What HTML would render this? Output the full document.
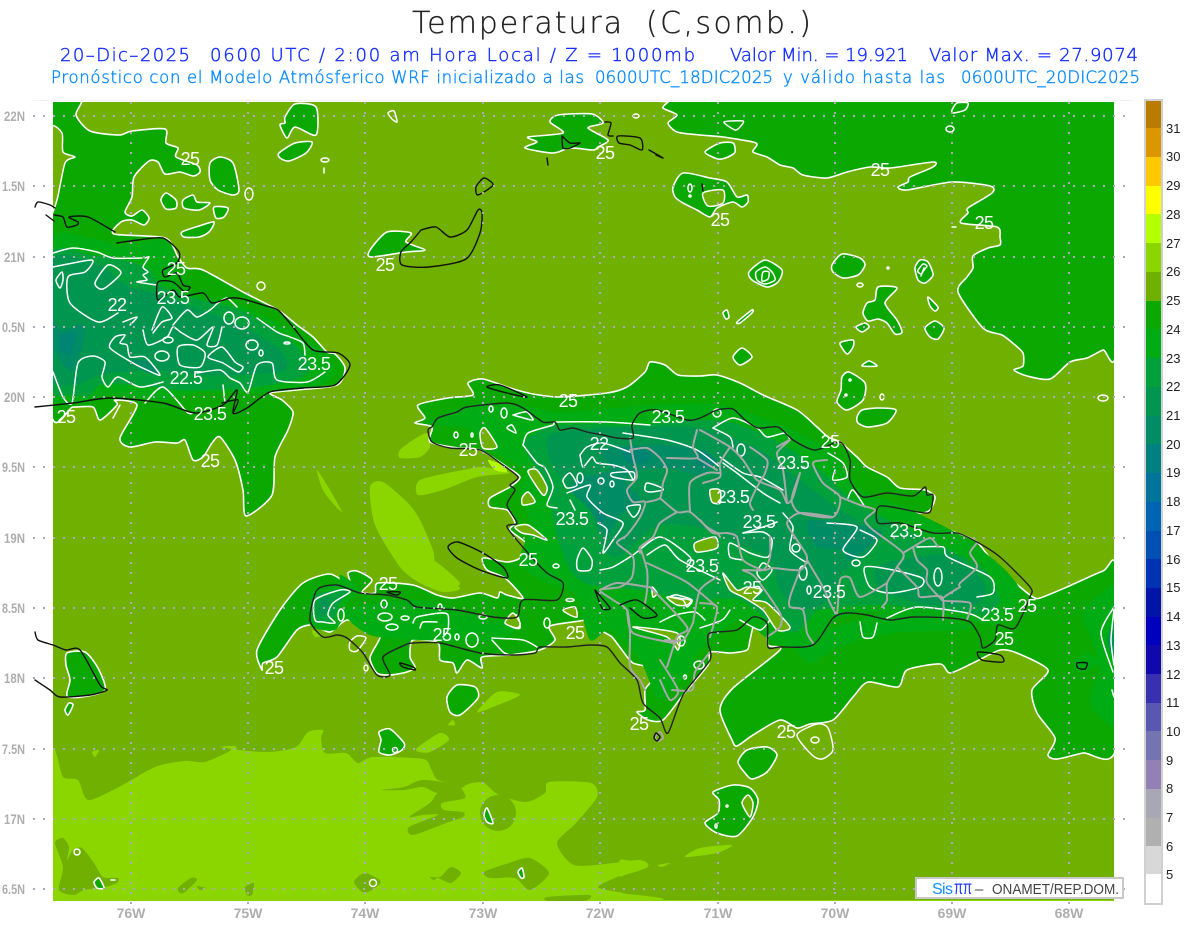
<!DOCTYPE html>
<html lang="es"><head><meta charset="utf-8"><title>Temperatura</title>
<style>
html,body{margin:0;padding:0;background:#fff}
svg{display:block}
text{font-family:"Liberation Sans",sans-serif}
.g{fill:#0aa800;stroke:#fff;stroke-width:1.6;stroke-linejoin:round}
.l{fill:#70b000;stroke:#fff;stroke-width:1.5;stroke-linejoin:round}
.n{fill:#70b000}
.b{fill:#8cd600}
.w{fill:none;stroke:#fff;stroke-width:1.5;stroke-linejoin:round;stroke-linecap:round}
.k{fill:none;stroke:#111;stroke-width:1.4;stroke-linejoin:round;stroke-linecap:round}
.p{fill:none;stroke:#a8a8a8;stroke-width:2;stroke-linejoin:round;stroke-linecap:round}
.d{stroke:#b0a8b8;stroke-width:2;stroke-dasharray:2 8;fill:none}
.t{fill:#fff;font-size:18px;text-anchor:middle;letter-spacing:-.6px}
.a{fill:#aeaeae;font-size:14px;font-weight:bold}
.c{fill:#aeaeae;font-size:14px;font-weight:bold;text-anchor:middle}
.v{fill:#222;font-size:13px}
.dj{font-family:"DejaVu Sans","Liberation Sans",sans-serif;font-weight:200}
.h1{fill:#1830ff;stroke:#1830ff;stroke-width:.45px;font-size:18px}
.h2{fill:#0a8cff;stroke:#0a8cff;stroke-width:.45px;font-size:16.5px}
</style></head><body>
<svg id="s" width="1200" height="927" viewBox="0 0 1200 927" xmlns="http://www.w3.org/2000/svg">
<defs><clipPath id="m"><rect x="53" y="102" width="1061" height="799"/></clipPath></defs>
<rect width="1200" height="927" fill="#fff"/>
<text class="dj" x="412" y="33" font-size="30" fill="#222" stroke="#222" stroke-width=".3" textLength="210" lengthAdjust="spacing">Temperatura</text>
<text class="dj" x="646" y="33" font-size="30" fill="#222" stroke="#222" stroke-width=".3" textLength="165" lengthAdjust="spacing">(C,somb.)</text>
<text class="h1 dj" x="60" y="61" textLength="130" lengthAdjust="spacing">20–Dic–2025</text>
<text class="h1 dj" x="210" y="61" textLength="485" lengthAdjust="spacing">0600 UTC / 2:00 am Hora Local / Z = 1000mb</text>
<text class="h1 dj" x="730" y="61" textLength="178" lengthAdjust="spacing">Valor Min. = 19.921</text>
<text class="h1 dj" x="929" y="61" textLength="209" lengthAdjust="spacing">Valor Max. = 27.9074</text>
<text class="h2 dj" x="51" y="83" textLength="533" lengthAdjust="spacing">Pronóstico con el Modelo Atmósferico WRF inicializado a las</text>
<text class="h2 dj" x="595" y="83" textLength="178" lengthAdjust="spacing">0600UTC_18DIC2025</text>
<text class="h2 dj" x="783" y="83" textLength="162" lengthAdjust="spacing">y válido hasta las</text>
<text class="h2 dj" x="961" y="83" textLength="179" lengthAdjust="spacing">0600UTC_20DIC2025</text>
<line x1="33" y1="100.5" x2="1133" y2="100.5" stroke="#f2f2f2"/>

<g clip-path="url(#m)">
<rect x="53" y="102" width="1061" height="799" class="n"/>
<rect x="53" y="900" width="1061" height="1" fill="#8cd600"/>
<!-- bright 26-27 -->
<polygon class="b" points="53,752 63,777 78,780 88,800 117,788 155,767 185,761 205,762 231,750 220,747 235,746 239,750 270,752 296,747 308,732 323,730 321,738 325,753 346,753 358,763 373,757 423,759 431,769 438,780 463,785 472,783 484,783 499,795 526,802 545,793 549,782 591,783 597,797 576,823 557,843 574,865 614,863 640,860 648,866 622,875 598,887 622,893 634,901 53,901"/>
<g class="n">
<polygon points="55,843 63,838 69,847 67,860 73,850 82,848 94,863 103,877 118,878 117,883 105,887 84,890 74,895 59,890 63,867"/>
<polygon points="178,888 191,878 197,880 185,892 180,893"/><polygon points="197,886 206,888 200,890"/>
<polygon points="245,887 254,883 252,895 247,895"/>
<polygon points="354,882 365,873 381,882 365,893"/>
<polygon points="430,877 440,877 451,867 461,873 451,883 438,878 434,880"/>
<polygon points="484,872 509,863 530,858 549,873 530,890 515,878 490,878"/>
<circle cx="498" cy="813" r="18"/>
<polygon points="547,897 589,895 585,901 549,901"/>
<polygon points="381,790 404,787 423,780 463,785 461,788 438,793 423,787 404,790"/>
<polygon points="461,788 465,798 442,803 444,810 463,812 463,817 446,823 413,835 409,827 438,815 423,815 409,817 430,803 438,793 457,788"/>
</g>
<g class="b">
<polygon points="92,752 99,750 95,757"/>
<polygon points="417,748 440,733 449,740 430,752 419,752"/>
<polygon points="448,725 453,720 455,725"/>
<polygon points="477,712 497,692 520,695 493,707"/>
<polygon points="685,857 700,848 732,845 717,853"/>
<polygon points="658,865 670,863 662,867"/>
<polygon points="620,860 635,862 648,867 625,875 620,876"/>
<polygon points="620,892 633,901 620,901"/>
<polygon points="400,450 413,440 427,433 430,447 420,457 400,458"/>
<polygon points="510,473 483,467 463,470 420,480 418,495 443,490 477,477"/>
<polygon points="370,487 383,482 408,503 420,520 433,550 437,570 460,588 443,592 420,583 400,567 375,525"/>
<polygon points="413,560 433,560 460,583 447,587 430,577"/>
<polygon points="317,470 330,490 342,512 330,500 322,488"/>
<polygon points="312,630 322,635 315,637"/>
</g>
<polygon points="488,460 503,465 507,472 495,470" fill="#b4ff00"/>

<!-- big NE 24-25 -->
<polygon class="g" points="668,102 663,108 677,115 668,123 677,132 700,135 723,137 753,142 757,145 753,152 767,157 780,165 793,168 803,175 827,178 847,172 870,167 890,168 933,162 933,167 910,177 908,182 898,187 907,190 952,182 990,186 992,193 968,208 968,213 961,223 997,227 1000,237 1000,245 988,248 973,256 973,268 967,277 958,292 983,328 1002,335 1015,345 1023,353 1023,366 1014,370 1027,376 1050,379 1070,362 1087,358 1103,350 1116,348 1116,100 668,100"/>

<!-- Cuba / NW -->
<polygon class="g" points="50,100 81,100 76,115 90,131 119,135 132,131 165,129 166,143 178,148 176,157 197,165 200,172 193,176 180,172 165,174 158,162 149,161 134,177 132,197 125,212 132,216 142,210 149,218 144,225 132,220 121,222 114,234 165,238 178,257 187,268 203,270 243,292 278,310 297,325 313,337 327,352 335,354 345,368 337,385 297,390 270,393 282,400 293,412 288,430 275,457 272,495 246,516 243,490 235,460 220,437 212,443 203,457 193,460 185,440 177,443 155,442 130,447 120,438 137,405 115,400 117,405 100,420 93,407 73,407 50,405"/>
<polygon class="l" points="50,130 62,133 63,152 75,157 65,163 57,200 50,212"/>

<!-- Jamaica-like -->
<polygon class="g" points="67,653 85,652 98,668 105,690 82,697 67,696 70,680 66,665"/>

<!-- Hispaniola main -->
<polygon class="g" points="415,423 425,418 418,405 448,398 473,395 468,383 483,379 510,388 533,394 560,397 607,393 627,387 645,372 650,362 665,365 678,375 700,376 717,375 740,383 763,395 797,410 817,427 828,437 840,442 857,457 867,467 887,477 900,488 925,490 935,497 930,510 920,513 890,510 907,515 933,525 957,533 977,542 997,567 1020,587 1033,597 1040,598 1067,587 1103,571 1116,570 1116,748 1083,753 1057,759 1048,755 1055,738 1037,713 1032,690 1048,670 1017,653 1000,650 973,663 950,673 940,664 907,670 898,687 868,682 853,697 833,720 810,724 797,728 780,720 753,735 737,746 732,740 720,710 733,688 780,650 768,645 767,625 755,622 750,640 747,650 730,653 710,652 708,665 683,695 663,720 648,720 637,712 645,710 645,690 652,680 652,668 633,663 622,650 612,637 602,630 612,620 612,612 597,612 585,620 550,626 555,640 540,650 510,655 482,657 482,668 467,660 457,673 453,663 440,660 438,643 413,640 410,657 415,667 407,672 390,675 377,673 370,658 378,642 380,635 367,630 347,620 330,632 312,625 297,630 277,657 263,663 262,670 257,650 280,610 303,583 330,574 350,585 348,573 357,571 372,580 362,592 375,593 378,583 413,585 437,595 453,598 480,593 497,598 500,592 507,595 523,598 505,578 487,570 483,558 507,562 520,558 528,545 510,530 515,523 507,510 490,507 490,498 510,487 520,477 507,467 480,450 458,448 430,442 432,427"/>

<!-- 23-24 shading -->
<g fill="#00ac14">
<polygon points="430,420 470,405 520,405 560,412 650,405 720,405 780,425 830,450 860,490 900,505 960,535 1000,565 1020,590 1010,615 990,625 940,615 870,612 835,620 810,650 770,640 740,620 700,650 690,670 660,700 640,660 610,630 590,640 575,595 540,580 520,560 530,525 520,490 525,470 490,450 470,430 440,425"/>
<polygon points="810,663 833,650 860,640 900,632 960,630 970,625 900,610 800,640"/>
<polygon points="1083,610 1100,595 1116,592 1116,720 1095,712 1090,695 1100,670 1092,640 1085,625"/>
<polygon points="1073,662 1087,653 1100,663 1080,672"/>
<polygon points="50,243 90,238 120,245 165,240 175,260 180,290 240,305 280,325 325,352 335,372 320,385 270,392 200,392 165,400 110,395 50,397"/>
<polygon points="345,610 420,600 490,620 520,620 500,640 420,640 370,635"/>
<polygon points="313,590 350,585 345,610 335,630 310,625"/>
<polygon points="340,575 360,590 345,600"/>
</g>
<polygon points="1114,625 1107,640 1114,660" fill="#009650"/>
<!-- 22-23 -->
<g fill="#00a03c">
<polygon points="525,440 560,425 640,425 720,420 775,440 820,470 860,505 940,545 985,570 1000,600 985,615 940,610 880,605 820,610 800,630 780,630 740,600 690,600 640,590 590,585 570,570 555,530 545,480 530,460"/>
<polygon points="50,255 90,255 130,262 150,270 160,285 200,300 240,310 290,340 310,365 300,378 250,388 180,390 130,385 100,385 90,395 70,395 50,385"/>
<polygon points="315,595 350,590 340,603 333,620 315,622"/>
</g>
<!-- 21-22 -->
<g fill="#009650">
<polygon points="550,435 600,428 700,428 760,450 800,480 840,510 880,535 860,560 840,575 830,600 800,610 780,590 770,560 730,540 710,530 660,525 620,555 605,550 590,510 570,490 550,460"/>
<polygon points="880,565 950,555 985,585 975,605 930,605 880,590"/>
<polygon points="50,260 100,265 125,285 160,295 200,310 240,325 280,350 285,370 240,375 200,375 150,370 100,375 75,385 50,375"/>
<polygon points="320,600 330,597 327,610 320,617"/>
</g>
<!-- 20-21 -->
<g fill="#008c64">
<polygon points="600,450 640,445 690,447 715,462 700,475 670,468 640,470 625,480 640,500 620,515 606,535 590,510 570,490 580,478 610,470"/>
<polygon points="810,520 880,530 870,545 850,560 840,550 815,545"/>
<polygon points="50,320 62,330 83,325 83,345 72,370 60,360 50,340"/>
<polygon points="133,360 150,362 160,373 145,372"/>
</g>
<g fill="#008474">
<polygon points="622,448 650,452 645,462 628,462"/>
<polygon points="702,450 716,460 708,468 696,462"/>
<polygon points="597,505 607,515 600,522"/>
<polygon points="60,335 75,335 70,355 60,350"/>
</g>

<!-- light pockets -->
<g class="l">
<polygon points="522,498 528,492 535,502 523,505"/>
<polygon points="528,472 537,470 547,487 543,495"/>
<polygon points="515,527 528,525 547,540 533,535 522,533"/>
<polygon points="695,543 715,537 717,548 697,552"/>
<polygon points="710,490 720,490 720,503 712,502"/>
<polygon points="563,610 575,607 577,617 570,615"/>
<polygon points="480,433 485,428 497,447 483,448"/>
<polygon points="507,620 517,615 520,628 512,627"/>
<polygon points="633,627 677,633 678,650 667,637"/>
<polygon points="667,597 690,600 687,605 677,605"/>
<polygon points="652,587 657,593 653,597"/>
<polygon points="723,573 737,590 747,587 762,590 753,600 767,603 790,627 777,630 763,610 743,597 730,590"/>
<polygon points="350,642 357,636 366,638 357,651 350,650"/>
<polygon points="505,623 513,613 520,623 517,628"/>
</g>

<!-- islands -->
<g class="g">
<polygon points="285,117 295,104 316,107 316,135 295,127 287,138 280,125 285,123"/>
<polygon points="279,153 295,143 312,142 306,153 289,161 280,158"/>
<polygon points="210,163 220,157 233,163 239,190 233,195 218,190 210,180"/>
<polygon points="161,200 166,193 176,200 176,208 166,209"/>
<polygon points="183,200 193,195 197,202 210,203 199,210 184,208"/>
<polygon points="214,207 228,208 224,217 216,218"/>
<polygon points="182,232 199,226 214,222 209,232 199,237 184,237"/>
<polygon points="370,250 387,232 411,233 406,242 425,250 406,252 371,257"/>
<polygon points="558,115 592,114 603,123 588,128 608,140 598,147 593,150 570,148 553,153 525,148 537,142 528,137 563,133 550,122"/>
<polygon points="705,152 720,143 733,143 735,152 728,157 718,159"/>
<polygon points="673,187 683,173 710,178 727,182 737,197 747,195 748,202 742,207 733,202 717,208 710,217 697,210 683,203 675,197"/>
<polygon points="749,272 765,260 782,270 778,282 767,287 752,280"/>
<polygon points="832,265 842,254 860,258 865,265 858,275 843,278 833,272"/>
<polygon points="733,357 742,348 752,357 740,365"/>
<polygon points="723,313 727,310 729,317 726,319"/>
<polygon points="737,322 752,310 752,313 740,323"/>
<polygon points="878,287 897,288 885,303 897,320 902,332 895,334 887,323 878,319 868,321 863,313 867,303 875,300"/>
<polygon points="915,268 920,260 928,262 933,275 925,283 918,280"/>
<polygon points="928,297 938,307 935,311 930,306"/>
<polygon points="925,328 935,321 944,328 938,339 930,337"/>
<polygon points="856,327 865,323 869,327 862,332"/>
<polygon points="840,343 853,340 853,347 847,354"/>
<polygon points="862,366 869,361 877,366"/>
<polygon points="849,372 865,383 863,400 847,410 837,402 841,390 842,377"/>
<polygon points="857,417 862,410 878,408 896,410 887,423 868,427 858,423"/>
<polygon points="952,110 957,103 968,103 965,110 953,113"/>
<polygon points="379,732 390,729 404,743 402,750 390,755 379,752 381,740"/>
<polygon points="447,697 457,685 475,687 478,698 460,715 450,712"/>
<polygon points="65,710 69,703 73,705 68,715"/>
<polygon points="94,882 99,878 104,888 97,888"/>
<polygon points="484,815 487,808 493,823 487,822"/>
<polygon points="518,872 522,868 524,877 521,878"/>
<polygon points="738,762 747,750 767,747 777,755 767,772 752,779 745,773"/>
<polygon points="713,792 733,785 750,788 758,800 753,817 737,836 717,833 705,823 718,813 719,800"/>
</g>
<polygon class="l" points="742,803 748,795 753,803 750,817"/>
<polygon class="l" points="703,193 723,190 723,203 708,206"/>
<g class="w">
<polygon points="797,735 817,724 828,728 833,750 822,759 812,755"/>
<polygon points="756,272 765,267 772,272 775,280 765,284 757,280"/>
<polygon points="763,272 769,272 768,279 762,281"/>
<polygon points="918,270 923,264 927,266 924,270 921,274 918,272"/>
<ellipse cx="249" cy="194" rx="4" ry="6"/>
<ellipse cx="325" cy="160" rx="4" ry="2"/>
<line x1="324" y1="168" x2="324" y2="173"/>
<polygon points="388,113 394,111 397,122 392,119"/>
<ellipse cx="261" cy="286" rx="4" ry="4"/>
<polygon points="724,122 743,121 740,127 735,130"/>
<ellipse cx="636" cy="116" rx="3" ry="2"/>
<ellipse cx="860" cy="285" rx="3" ry="2"/>
<ellipse cx="882" cy="397" rx="2" ry="3"/>
<ellipse cx="1103" cy="398" rx="5" ry="3"/>
<ellipse cx="815" cy="740" rx="4" ry="3"/>
<ellipse cx="950" cy="129" rx="4" ry="3"/>
<circle cx="77" cy="852" r="3"/><circle cx="373" cy="883" r="3.5"/><circle cx="395" cy="750" r="2.5"/>
<line x1="111" y1="880" x2="115" y2="880"/>
<ellipse cx="366" cy="668" rx="2" ry="3"/>
<line x1="924" y1="268" x2="921" y2="276"/>
<ellipse cx="888" cy="268" rx="1" ry="1"/>
<line x1="952" y1="227" x2="956" y2="227"/>
<ellipse cx="846" cy="395" rx="1" ry="1"/>
<ellipse cx="850" cy="380" rx="1" ry="1"/>
<ellipse cx="690" cy="188" rx="2" ry="4"/>
<ellipse cx="690" cy="196" rx="1" ry="1"/>
<ellipse cx="727" cy="806" rx="1" ry="1"/><ellipse cx="716" cy="826" rx="1" ry="2"/>

<!-- Cuba 23.5 -->
<polyline points="53,253 73,248 97,252 113,258 142,258"/>
<polyline points="145,258 149,257 143,267 148,272 143,275 147,280 137,282 157,285"/>
<polyline points="53,267 92,260 85,272 68,277 70,303 98,322 118,313"/>
<polygon points="95,283 108,265 121,273 103,289"/>
<polygon points="56,280 62,272 63,280 60,288"/>
<polyline points="123,322 137,317 130,325"/>
<polygon points="110,348 115,337 125,335 120,343 127,345 130,357 145,357 160,375 147,370 133,363"/>
<polyline points="53,372 63,397 72,403 78,363 93,356 105,362 102,377 108,387 118,377 140,387 163,382"/>
<polyline points="145,403 163,387 187,412 193,413"/>
<polyline points="143,330 148,345 167,337 173,327 182,333 197,340 213,327 207,345 217,345 222,327"/>
<polyline points="152,330 162,307 172,318 162,322 153,333"/>
<polyline points="173,325 187,310 197,317 210,310 218,303 227,298 237,307"/>
<ellipse cx="229" cy="318" rx="5" ry="6"/><ellipse cx="242" cy="323" rx="7" ry="6"/><ellipse cx="252" cy="345" rx="6" ry="5"/><ellipse cx="261" cy="353" rx="2" ry="3"/><ellipse cx="162" cy="356" rx="7" ry="5"/><ellipse cx="168" cy="340" rx="5" ry="3"/><ellipse cx="287" cy="343" rx="3" ry="1"/>
<polygon points="178,347 193,345 205,353 200,367 180,365"/>
<polygon points="208,357 222,347 235,362 243,367 238,372 223,363"/>
<polyline points="197,373 220,370 230,378 240,383 248,392 257,365 272,363 277,380 307,382 325,372"/>
<polyline points="257,318 277,332 290,337 303,343 305,355"/>
<polyline points="223,385 225,403"/>
<polyline points="113,418 120,405"/>

<!-- Hispaniola 23.5 -->
<polyline points="523,445 528,433 553,425 557,422 607,422 650,425"/>
<polyline points="523,445 537,463 545,468 553,487 547,505 557,508"/>
<polyline points="623,433 667,440 697,450 720,467"/>
<polyline points="580,455 587,447 603,443 630,452"/>
<polyline points="580,455 583,467 592,457 597,463 613,465 627,470 633,480"/>
<polyline points="567,493 590,485 587,497 603,513 623,523 613,540 603,553 607,530 598,523"/>
<polyline points="570,500 575,510"/>
<polygon points="563,480 570,473 577,485 567,488"/>
<ellipse cx="580" cy="478" rx="3" ry="5"/><ellipse cx="601" cy="481" rx="3" ry="3"/><ellipse cx="612" cy="484" rx="2" ry="3"/>
<polygon points="627,507 640,505 638,513 633,517"/>
<polygon points="645,490 647,483 660,487 663,490 650,492"/>
<polygon points="612,473 633,472 633,480 613,477"/>
<polygon points="577,560 583,548 592,560 590,570 578,570"/>
<polyline points="600,570 613,567 633,555 660,537 690,557 687,567"/>
<polyline points="647,555 665,545 680,560 720,580"/>
<polygon points="683,600 670,597 677,595 692,600 687,607"/>
<ellipse cx="456" cy="435" rx="2" ry="3"/><ellipse cx="504" cy="413" rx="3" ry="5"/><ellipse cx="491" cy="409" rx="2" ry="3"/>
<polyline points="513,415 520,417 533,420 527,412 520,413 513,415"/>
<polygon points="507,428 512,425 516,433"/>
<ellipse cx="472" cy="435" rx="1" ry="2"/>
<ellipse cx="556" cy="566" rx="3" ry="2"/>
<ellipse cx="570" cy="600" rx="4" ry="1.5"/>
<polyline points="713,428 733,418 757,428 767,437 785,433 790,440"/>
<polyline points="713,428 730,437 733,447"/>
<ellipse cx="717" cy="413" rx="4" ry="4"/><ellipse cx="741" cy="450" rx="4" ry="6"/>
<polyline points="720,457 743,473 760,477 783,490"/>
<polyline points="723,463 737,473 763,493 780,503"/>
<polyline points="828,453 843,463 847,477 833,480 835,470"/>
<polyline points="848,498 853,490 865,507"/>
<polyline points="783,513 793,527 790,550 807,563"/>
<polyline points="743,533 763,527 777,522"/>
<polyline points="743,533 763,532 772,540 768,557 750,553 730,543 730,557 743,560"/>
<polygon points="757,573 763,563 772,570 763,580"/>
<ellipse cx="803" cy="573" rx="4" ry="7"/><ellipse cx="809" cy="590" rx="2" ry="4"/><ellipse cx="796" cy="548" rx="4" ry="4"/>
<polyline points="827,523 857,527 843,550 863,557 877,540 860,530"/>
<polygon points="865,567 893,570 922,578 920,587 890,593 870,587"/>
<ellipse cx="856" cy="563" rx="4" ry="3"/><ellipse cx="938" cy="577" rx="4" ry="9"/>
<polyline points="917,547 943,547 948,557 990,577 993,593 977,597"/>
<polyline points="887,618 917,607 967,613 983,620"/>
<polyline points="860,622 863,637 873,637 877,623"/>
<polyline points="700,628 722,620 730,610"/>
<polyline points="660,622 675,615 695,612 705,620"/>
<polyline points="740,620 760,630 770,620"/>
<ellipse cx="699" cy="665" rx="5" ry="4"/><ellipse cx="681" cy="641" rx="4" ry="5"/><ellipse cx="685" cy="677" rx="1.5" ry="2"/>
<polyline points="1114,607 1101,633 1113,672"/>
<polyline points="1114,610 1111,640 1114,665"/>
<polyline points="1112,690 1114,697"/>
<!-- Haiti S peninsula -->
<polygon points="315,600 340,590 350,592 333,603 328,615 335,623 323,622 315,620"/>
<ellipse cx="341" cy="615" rx="3" ry="6"/>
<ellipse cx="384" cy="604" rx="3" ry="4"/><ellipse cx="385" cy="617" rx="7" ry="4"/><ellipse cx="392" cy="627" rx="6" ry="3"/><ellipse cx="405" cy="618" rx="4" ry="2"/><ellipse cx="440" cy="607" rx="2" ry="3"/><ellipse cx="483" cy="617" rx="4" ry="2"/>
<polyline points="413,623 417,617 440,613 448,615 448,630 443,637"/>
<polyline points="420,628 423,622 437,622"/>
<ellipse cx="472" cy="640" rx="6" ry="7"/><ellipse cx="457" cy="637" rx="2" ry="3"/>
<polyline points="492,638 523,640 537,647"/>
<polyline points="492,640 503,652 510,655"/>
<ellipse cx="547" cy="623" rx="3" ry="5"/>
</g>
</g>

<!-- province lines -->
<g class="p">
<polyline points="630,438 633,457 637,477 627,490 633,502 645,502 640,517 627,535 617,543 633,557 632,577 620,587 600,590 613,600 627,610 630,633 630,667 640,680 645,690"/>
<polyline points="630,450 647,448 660,458 667,470 663,483 660,498 647,502"/>
<polyline points="660,498 677,512 690,512 707,527 717,533 720,537"/>
<polyline points="690,512 690,483 707,473 720,473"/>
<polyline points="697,430 693,447 697,458 667,458"/>
<polyline points="697,458 717,470"/>
<polyline points="677,512 660,523 653,537 640,547 640,553"/>
<polyline points="640,547 647,570 647,590 645,603"/>
<polyline points="647,563 683,580 697,590 717,607"/>
<polyline points="600,590 617,583 647,587 653,590 687,627 677,637 667,667"/>
<polyline points="717,577 700,590 693,623"/>
<polyline points="627,610 633,633 673,643"/>
<polyline points="700,430 730,447 743,460 757,480 780,490 787,503 793,497 800,473"/>
<polyline points="730,447 720,463 720,477 703,483"/>
<polyline points="750,447 767,460 765,473 757,487 750,503 753,510"/>
<polyline points="777,447 790,440 777,453 783,470 787,503"/>
<polyline points="800,473 793,493 792,503 800,513 833,517 840,497 823,483 813,463 827,460"/>
<polyline points="840,497 860,505 875,510 865,520 873,530 903,553 897,567 887,583 887,600 882,607"/>
<polyline points="833,517 800,513 787,523 797,540 807,557 800,570 773,568 763,570 743,560 737,537 727,533 713,533 700,520"/>
<polyline points="770,537 770,557 763,570 743,570 755,577 780,613 780,627 767,637"/>
<polyline points="800,570 790,597 790,607 803,610 807,633 813,643"/>
<polyline points="807,560 823,587 830,603 837,613 840,580 850,578 860,597 887,583"/>
<polyline points="897,567 917,587 920,597 942,597 943,620"/>
<polyline points="903,553 913,547 930,538 938,547"/>
<polyline points="913,547 917,560 927,570 927,583 942,600"/>
<polyline points="960,587 942,600 970,603 967,620"/>
<polyline points="977,543 970,553 977,567 960,583 960,587"/>
<polyline points="700,603 717,607 710,637"/>
<polyline points="693,623 683,640 665,640"/>
<polyline points="660,660 678,690 670,700 660,680"/>
<polyline points="672,690 692,690 695,672 710,652"/>
<polygon points="655,737 660,732 663,738 658,741"/>
</g>

<!-- coasts -->
<g class="k">
<polyline stroke="#222" points="432,427 438,418 457,412 467,407 507,403 523,408 543,422 555,422 560,430 573,428 587,432 603,435 617,438 633,438 632,425 640,413 657,410 687,420 700,418 717,410 733,409 745,420 758,428 778,427 793,440 815,450 840,442 850,460 850,480 863,497 887,493 913,496 925,487 927,495 933,495 930,512 918,512 880,506 878,523 900,523 933,533 957,533 977,542 1000,557 1030,587 1030,597 1015,628 998,625 995,640 983,648 980,637 970,622 950,618 913,617 890,620 867,615 847,613 833,618 813,645 780,647 768,647 767,623 753,617 737,630 710,633 708,643 710,660 683,695 668,733 660,718 643,703 637,680 620,663 607,647 590,645 567,647 540,647 535,653 513,655 480,653 440,643 413,643 405,645 383,657 390,675 377,675 363,653 347,638 337,635 323,637 310,620 317,590 337,585 360,593 387,595 407,600 417,607 457,610 493,617 517,617 523,600 557,600 563,583 547,573 528,553 507,527 517,523 507,505 515,490 510,485 518,477 500,463 480,450 450,448 432,442 428,430 432,427"/>
<polygon points="448,547 458,542 483,553 503,567 507,578 480,570 457,558"/>
<polygon points="487,387 500,385 527,397 507,393"/>
<polygon points="400,663 413,667 415,670 403,667"/>
<polygon points="387,592 400,592 397,595"/>
<polyline points="620,605 637,600 657,615 643,618 630,608"/>
<polyline points="595,590 610,608 602,608 595,590"/>
<polygon points="978,652 1000,655 1003,662 982,660"/>
<polygon points="1077,663 1087,663 1085,669 1078,668"/>
<polyline points="35,207 38,202 50,205 55,208"/>
<polyline points="46,215 54,221"/>
<polyline points="54,215 63,217 67,227 77,225 78,222 69,217 88,217 115,232"/>
<polyline points="117,243 138,240 163,238 179,252 177,263 163,270 165,277 177,273 183,285 190,287 185,292 173,282 158,282 158,300 173,290 180,297 203,293 212,303 230,298 243,299 263,305 278,310 293,327 313,350 338,353 350,365 335,385 303,388 270,392 247,408 233,413 237,390 223,405 195,413 163,403 110,398 73,403 35,407"/>
<polyline points="222,403 238,400 233,413"/>
<polyline points="421,230 436,227 450,237 467,230 478,210 482,213 480,233 466,259 429,267 402,265 401,252 411,242 421,230"/>
<polygon points="484,178 493,185 478,195 476,187"/>
<line x1="547" y1="158" x2="548" y2="165"/>
<polyline points="562,136 570,143 580,143 570,148 563,148 562,136"/>
<polyline points="605,122 611,123 608,135 613,136"/>
<polygon points="618,136 640,138 642,150 630,145 619,143"/>
<polyline points="649,150 663,158 656,155"/>
<line x1="702" y1="184" x2="703" y2="191"/>
<polyline points="35,632 38,640 53,645 66,650 80,650 100,685 107,690 90,695 60,697 50,690 35,680"/>
<polygon points="656,733 660,737 657,741 654,738"/>
</g>

<!-- grid -->
<g class="d">
<path d="M33 116H1133M33 186H1133M33 257H1133M33 327H1133M33 397H1133M33 467H1133M33 538H1133M33 608H1133M33 678H1133M33 749H1133M33 819H1133M33 889H1133"/>
<path d="M131 102V905M248 102V905M365 102V905M483 102V905M600 102V905M718 102V905M835 102V905M952 102V905M1069 102V905"/>
</g>

<!-- contour labels -->
<g class="t" clip-path="url(#m)">
<text x="190" y="165">25</text><text x="605" y="159">25</text><text x="880" y="176">25</text><text x="720" y="226">25</text><text x="984" y="229">25</text><text x="385" y="271">25</text><text x="176" y="275">25</text><text x="66" y="423">25</text><text x="210" y="467">25</text><text x="568" y="407">25</text><text x="468" y="456">25</text><text x="830" y="448">25</text><text x="528" y="566">25</text><text x="388" y="590">25</text><text x="442" y="641">25</text><text x="575" y="639">25</text><text x="274" y="674">25</text><text x="1027" y="612">25</text><text x="1004" y="645">25</text><text x="639" y="730">25</text><text x="786" y="738">25</text><text x="752" y="594">25</text>
<text x="173" y="304">23.5</text><text x="314" y="370">23.5</text><text x="210" y="420">23.5</text><text x="668" y="423">23.5</text><text x="793" y="469">23.5</text><text x="733" y="503">23.5</text><text x="759" y="528">23.5</text><text x="906" y="537">23.5</text><text x="572" y="525">23.5</text><text x="702" y="572">23.5</text><text x="829" y="598">23.5</text><text x="997" y="621">23.5</text>
<text x="117" y="311">22</text><text x="186" y="384">22.5</text><text x="599" y="450">22</text>
</g>

<!-- axis labels -->
<g>
<text class="a" x="4" y="121" textLength="21" lengthAdjust="spacingAndGlyphs">22N</text><text class="a" x="2" y="191" textLength="23" lengthAdjust="spacingAndGlyphs">1.5N</text><text class="a" x="4" y="262" textLength="21" lengthAdjust="spacingAndGlyphs">21N</text><text class="a" x="2" y="332" textLength="23" lengthAdjust="spacingAndGlyphs">0.5N</text><text class="a" x="4" y="402" textLength="21" lengthAdjust="spacingAndGlyphs">20N</text><text class="a" x="2" y="472" textLength="23" lengthAdjust="spacingAndGlyphs">9.5N</text><text class="a" x="4" y="543" textLength="21" lengthAdjust="spacingAndGlyphs">19N</text><text class="a" x="2" y="613" textLength="23" lengthAdjust="spacingAndGlyphs">8.5N</text><text class="a" x="4" y="683" textLength="21" lengthAdjust="spacingAndGlyphs">18N</text><text class="a" x="2" y="754" textLength="23" lengthAdjust="spacingAndGlyphs">7.5N</text><text class="a" x="4" y="824" textLength="21" lengthAdjust="spacingAndGlyphs">17N</text><text class="a" x="2" y="894" textLength="23" lengthAdjust="spacingAndGlyphs">6.5N</text>
<text class="c" x="131" y="918">76W</text><text class="c" x="248" y="918">75W</text><text class="c" x="365" y="918">74W</text><text class="c" x="483" y="918">73W</text><text class="c" x="600" y="918">72W</text><text class="c" x="718" y="918">71W</text><text class="c" x="835" y="918">70W</text><text class="c" x="952" y="918">69W</text><text class="c" x="1069" y="918">68W</text>
</g>

<!-- colorbar -->
<rect x="1145" y="100" width="17" height="804" fill="#fff" stroke="#d0d0d0" stroke-width="2"/>
<g>
<rect x="1146" y="101" width="15" height="27" fill="#ba7c00"/>
<rect x="1146" y="128" width="15" height="29" fill="#dc9600"/>
<rect x="1146" y="157" width="15" height="29" fill="#ffc800"/>
<rect x="1146" y="186" width="15" height="28" fill="#ffff00"/>
<rect x="1146" y="214" width="15" height="29" fill="#b4ff00"/>
<rect x="1146" y="243" width="15" height="29" fill="#8cd600"/>
<rect x="1146" y="272" width="15" height="29" fill="#70b000"/>
<rect x="1146" y="301" width="15" height="28" fill="#0aa800"/>
<rect x="1146" y="329" width="15" height="29" fill="#00ac14"/>
<rect x="1146" y="358" width="15" height="29" fill="#00a03c"/>
<rect x="1146" y="387" width="15" height="29" fill="#009650"/>
<rect x="1146" y="416" width="15" height="28" fill="#008c64"/>
<rect x="1146" y="444" width="15" height="29" fill="#008080"/>
<rect x="1146" y="473" width="15" height="29" fill="#00749a"/>
<rect x="1146" y="502" width="15" height="29" fill="#0064b4"/>
<rect x="1146" y="531" width="15" height="28" fill="#0050b4"/>
<rect x="1146" y="559" width="15" height="29" fill="#0032b4"/>
<rect x="1146" y="588" width="15" height="29" fill="#0014a8"/>
<rect x="1146" y="617" width="15" height="28" fill="#0000be"/>
<rect x="1146" y="645" width="15" height="29" fill="#1008ac"/>
<rect x="1146" y="674" width="15" height="29" fill="#3830b0"/>
<rect x="1146" y="703" width="15" height="28" fill="#5858b0"/>
<rect x="1146" y="731" width="15" height="29" fill="#7474b0"/>
<rect x="1146" y="760" width="15" height="29" fill="#9480b4"/>
<rect x="1146" y="789" width="15" height="29" fill="#a8a8b4"/>
<rect x="1146" y="818" width="15" height="28" fill="#b0b0b0"/>
<rect x="1146" y="846" width="15" height="28" fill="#d8d8d8"/>
</g>
<g class="v">
<text x="1166" y="133">31</text><text x="1166" y="161">30</text><text x="1166" y="190">29</text><text x="1166" y="219">28</text><text x="1166" y="248">27</text><text x="1166" y="276">26</text><text x="1166" y="305">25</text><text x="1166" y="334">24</text><text x="1166" y="363">23</text><text x="1166" y="391">22</text><text x="1166" y="420">21</text><text x="1166" y="449">20</text><text x="1166" y="477">19</text><text x="1166" y="506">18</text><text x="1166" y="535">17</text><text x="1166" y="564">16</text><text x="1166" y="592">15</text><text x="1166" y="621">14</text><text x="1166" y="650">13</text><text x="1166" y="679">12</text><text x="1166" y="707">11</text><text x="1166" y="736">10</text><text x="1166" y="765">9</text><text x="1166" y="793">8</text><text x="1166" y="822">7</text><text x="1166" y="851">6</text><text x="1166" y="879">5</text>
</g>

<!-- logo box -->
<rect x="916" y="878" width="207" height="20" fill="#fff" stroke="#c8c8c8" stroke-width="2"/>
<text x="932" y="894" font-size="16" fill="#1090ff" textLength="21">Sis</text>
<text x="954" y="894" font-size="19" fill="#2038ff" textLength="18" lengthAdjust="spacingAndGlyphs">ππ</text>
<text x="975" y="894" font-size="15" fill="#444">–</text>
<text x="992" y="894" font-size="15" fill="#444" textLength="127" lengthAdjust="spacingAndGlyphs">ONAMET/REP.DOM.</text>
</svg>
<script>
(function(){
var svg=document.getElementById('s');
var els=svg.querySelectorAll('polygon,polyline');
for(var i=0;i<els.length;i++){
var e=els[i],closed=e.tagName==='polygon';
var n=e.getAttribute('points').trim().split(/\s+/).map(function(s){return s.split(',').map(Number)});
if(n.length<3)continue;
var L=n.length,d='M'+n[0][0]+' '+n[0][1];
var P=function(k){return closed?n[(k+L)%L]:n[Math.max(0,Math.min(L-1,k))]};
var cnt=closed?L:L-1;
for(var k=0;k<cnt;k++){
var p0=P(k-1),p1=P(k),p2=P(k+1),p3=P(k+2),f=8;
d+='C'+(p1[0]+(p2[0]-p0[0])/f).toFixed(1)+' '+(p1[1]+(p2[1]-p0[1])/f).toFixed(1)+' '+(p2[0]-(p3[0]-p1[0])/f).toFixed(1)+' '+(p2[1]-(p3[1]-p1[1])/f).toFixed(1)+' '+p2[0]+' '+p2[1];
}
if(closed)d+='Z';
var q=document.createElementNS('http://www.w3.org/2000/svg','path');
q.setAttribute('d',d);
for(var a=0;a<e.attributes.length;a++){var m=e.attributes[a];if(m.name!=='points')q.setAttribute(m.name,m.value);}
e.parentNode.replaceChild(q,e);
}
})();
</script>
</body></html>
